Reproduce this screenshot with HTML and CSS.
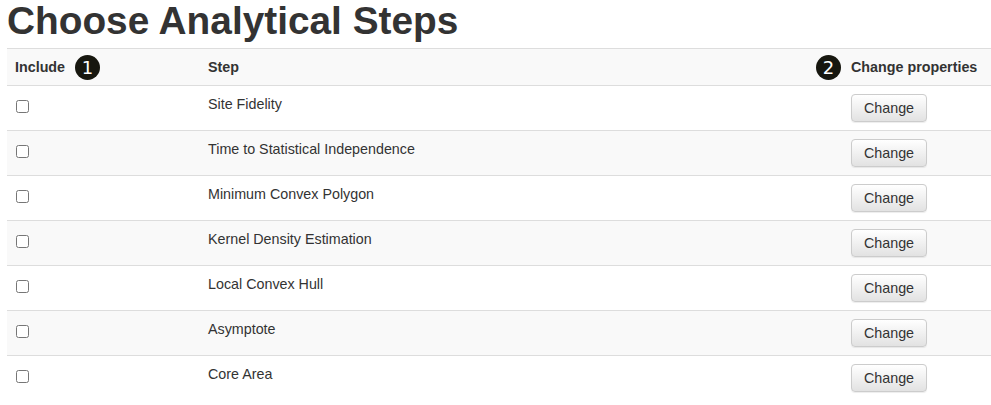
FILE: index.html
```html
<!DOCTYPE html>
<html lang="en">
<head>
<meta charset="utf-8">
<title>Choose Analytical Steps</title>
<link rel="stylesheet" href="styles.css">
</head>
<body>
<div class="page">
  <h1 class="title">Choose Analytical Steps</h1>
  <table class="steps">
    <colgroup>
      <col class="col-include">
      <col class="col-step">
      <col class="col-change">
    </colgroup>
    <thead>
      <tr>
        <th class="head-cell">Include<span class="marker marker-1">1</span></th>
        <th class="head-cell">Step</th>
        <th class="head-cell"><span class="marker marker-2">2</span>Change properties</th>
      </tr>
    </thead>
    <tbody>
      <tr><td><input type="checkbox" class="check"></td><td>Site Fidelity</td><td><button class="btn">Change</button></td></tr>
      <tr><td><input type="checkbox" class="check"></td><td>Time to Statistical Independence</td><td><button class="btn">Change</button></td></tr>
      <tr><td><input type="checkbox" class="check"></td><td>Minimum Convex Polygon</td><td><button class="btn">Change</button></td></tr>
      <tr><td><input type="checkbox" class="check"></td><td>Kernel Density Estimation</td><td><button class="btn">Change</button></td></tr>
      <tr><td><input type="checkbox" class="check"></td><td>Local Convex Hull</td><td><button class="btn">Change</button></td></tr>
      <tr><td><input type="checkbox" class="check"></td><td>Asymptote</td><td><button class="btn">Change</button></td></tr>
      <tr><td><input type="checkbox" class="check"></td><td>Core Area</td><td><button class="btn">Change</button></td></tr>
    </tbody>
  </table>
</div>
</body>
</html>
```
FILE: styles.css
```css
html, body {
  margin: 0;
  padding: 0;
  background: #fff;
  overflow: hidden;
}

body {
  font-family: "Liberation Sans", Arial, sans-serif;
  font-size: 14.3px;
  line-height: 20px;
  color: #333;
}

.page {
  padding-left: 7px;
}

.title {
  margin: 0 0 5px 0;
  font-size: 38.8px;
  line-height: 1.1;
  font-weight: bold;
  color: #333;
}

.steps {
  width: 984px;
  border-collapse: collapse;
  border-spacing: 0;
  table-layout: fixed;
}

.col-include { width: 193px; }
.col-step { width: 643px; }
.col-change { width: 148px; }

.steps th,
.steps td {
  padding: 8px;
  border-top: 1px solid #ddd;
  text-align: left;
  vertical-align: top;
  line-height: 20px;
}

.steps thead tr {
  background: #f9f9f9;
}

.head-cell {
  position: relative;
  font-weight: bold;
  white-space: nowrap;
}

.steps tbody tr:nth-child(even) {
  background: #f9f9f9;
}

.marker {
  position: absolute;
  top: 6px;
  width: 25px;
  height: 25px;
  border-radius: 50%;
  background: #17170f;
  color: #fff;
  font-family: "DejaVu Sans", sans-serif;
  font-weight: normal;
  font-size: 18px;
  line-height: 25px;
  text-align: center;
}

.marker-1 { left: 68px; }
.marker-2 { left: -27px; }

.check {
  display: block;
  margin: 6px 0 0 1px;
  width: 13px;
  height: 13px;
}

.btn {
  display: block;
  box-sizing: border-box;
  width: 76px;
  height: 28px;
  padding: 0;
  border: 1px solid #ccc;
  border-radius: 4px;
  background: linear-gradient(to bottom, #fff 0%, #e2e2e2 100%);
  box-shadow: inset 0 1px 0 rgba(255,255,255,.15), 0 1px 1px rgba(0,0,0,.075);
  font-family: "Liberation Sans", Arial, sans-serif;
  font-size: 14.3px;
  line-height: 26px;
  text-align: center;
  color: #333;
  cursor: pointer;
}
```
